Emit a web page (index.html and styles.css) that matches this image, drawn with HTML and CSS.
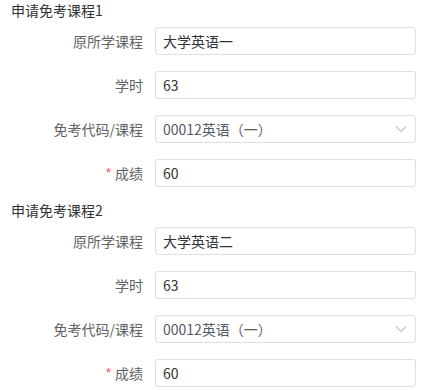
FILE: index.html
```html
<!DOCTYPE html>
<html lang="zh-CN">
<head>
<meta charset="utf-8">
<link rel="stylesheet" href="styles.css">
</head>
<body>
<div class="form">
  <section class="group">
    <div class="group-title">申请免考课程1</div>
    <div class="item">
      <label class="label">原所学课程</label>
      <div class="control"><div class="input">大学英语一</div></div>
    </div>
    <div class="item">
      <label class="label">学时</label>
      <div class="control"><div class="input">63</div></div>
    </div>
    <div class="item">
      <label class="label">免考代码/课程</label>
      <div class="control"><div class="input select"><span class="sel-text">00012英语（一）</span>
        <svg class="arrow" width="12" height="8" viewBox="0 0 12 8"><polyline points="1,1.5 6,6.5 11,1.5" fill="none" stroke="#c0c4cc" stroke-width="1.2"/></svg></div></div>
    </div>
    <div class="item">
      <label class="label"><span class="req">*</span> 成绩</label>
      <div class="control"><div class="input">60</div></div>
    </div>
  </section>
  <section class="group">
    <div class="group-title">申请免考课程2</div>
    <div class="item">
      <label class="label">原所学课程</label>
      <div class="control"><div class="input">大学英语二</div></div>
    </div>
    <div class="item">
      <label class="label">学时</label>
      <div class="control"><div class="input">63</div></div>
    </div>
    <div class="item">
      <label class="label">免考代码/课程</label>
      <div class="control"><div class="input select"><span class="sel-text">00012英语（一）</span>
        <svg class="arrow" width="12" height="8" viewBox="0 0 12 8"><polyline points="1,1.5 6,6.5 11,1.5" fill="none" stroke="#c0c4cc" stroke-width="1.2"/></svg></div></div>
    </div>
    <div class="item">
      <label class="label"><span class="req">*</span> 成绩</label>
      <div class="control"><div class="input">60</div></div>
    </div>
  </section>
</div>
</body>
</html>
```
FILE: styles.css
```css
html, body {
  margin: 0;
  padding: 0;
  background: #ffffff;
}
body {
  font-family: "Noto Sans CJK SC", "Noto Sans", sans-serif;
  font-size: 14px;
}
.form {
  width: 424px;
}
.group-title {
  padding-left: 11px;
  height: 21px;
  line-height: 21px;
  color: #303133;
  margin-bottom: 6px;
}
.item {
  display: flex;
  align-items: center;
  height: 28px;
  margin-bottom: 16px;
}
.group .item:last-child {
  margin-bottom: 13px;
}
.label {
  width: 155px;
  box-sizing: border-box;
  padding-right: 12px;
  text-align: right;
  color: #606266;
  line-height: 28px;
}
.req {
  color: #f56c6c;
}
.control {
  width: 261px;
}
.input {
  box-sizing: border-box;
  height: 28px;
  border: 1px solid #dcdfe6;
  border-radius: 3px;
  padding-left: 7px;
  line-height: 26px;
  color: #333333;
  display: flex;
  align-items: center;
}
.select {
  justify-content: space-between;
  padding-right: 8px;
}
.sel-text {
  color: #555a66;
}
.arrow {
  display: block;
}
```
